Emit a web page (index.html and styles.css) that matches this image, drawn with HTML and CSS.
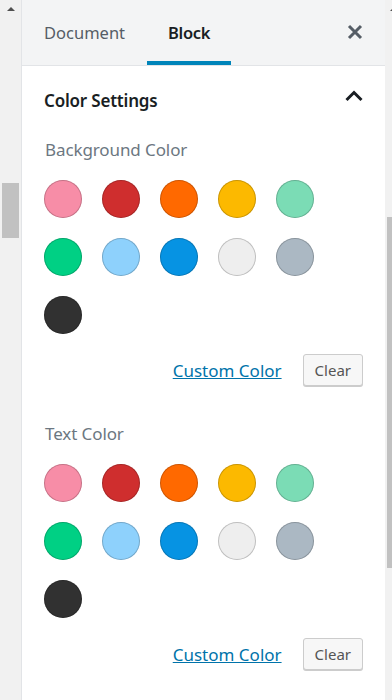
FILE: index.html
```html
<!DOCTYPE html>
<html lang="en">
<head>
    <meta charset="UTF-8">
    <meta name="viewport" content="width=device-width, initial-scale=1.0">
    <title>Block Settings</title>
    <link rel="stylesheet" href="styles.css">
</head>
<body>
    <div class="page">
        <div class="scrollbar left-bar">
            <span class="arrow-up"></span>
            <span class="thumb left-thumb"></span>
        </div>

        <aside class="sidebar">
            <div class="sidebar-header">
                <button class="tab">Document</button>
                <button class="tab active">Block</button>
                <button class="close-btn" aria-label="Close settings">
                    <svg width="20" height="20" viewBox="0 0 20 20">
                        <path d="M4 4 L16 16 M16 4 L4 16" stroke="#555d66" stroke-width="3" fill="none"/>
                    </svg>
                </button>
            </div>

            <div class="panel">
                <div class="panel-title">
                    <span>Color Settings</span>
                    <svg width="20" height="20" viewBox="0 0 20 20">
                        <path d="M2.5 10 L10 2.5 L17.5 10" stroke="#191e23" stroke-width="3" fill="none"/>
                    </svg>
                </div>

                <div class="color-section">
                    <div class="section-label">Background Color</div>
                    <div class="swatches" data-palette></div>
                    <div class="color-actions">
                        <a href="#" class="custom-link">Custom Color</a>
                        <button class="clear-btn">Clear</button>
                    </div>
                </div>

                <div class="color-section">
                    <div class="section-label">Text Color</div>
                    <div class="swatches" data-palette></div>
                    <div class="color-actions">
                        <a href="#" class="custom-link">Custom Color</a>
                        <button class="clear-btn">Clear</button>
                    </div>
                </div>
            </div>
        </aside>

        <div class="scrollbar right-bar">
            <span class="arrow-up"></span>
            <span class="thumb right-thumb"></span>
        </div>
    </div>

    <script>
        // default editor palette
        const palette = [
            '#f78da7', '#cf2e2e', '#ff6900', '#fcb900', '#7bdcb5',
            '#00d084', '#8ed1fc', '#0693e3', '#eeeeee', '#abb8c3',
            '#313131'
        ];

        document.querySelectorAll('[data-palette]').forEach(list => {
            palette.forEach(color => {
                const swatch = document.createElement('button');
                swatch.className = 'swatch';
                swatch.style.backgroundColor = color;
                list.appendChild(swatch);
            });
        });
    </script>
</body>
</html>
```

FILE: styles.css
```css
html, body {
    margin: 0;
    padding: 0;
}
body {
    font-family: "Noto Sans", "Open Sans", sans-serif;
    background-color: #f1f1f1;
    width: 392px;
    height: 700px;
    overflow: hidden;
}
button {
    font-family: inherit;
}
.page {
    display: flex;
    height: 700px;
}
.scrollbar {
    flex-shrink: 0;
    display: flex;
    flex-direction: column;
    align-items: center;
    background-color: #f1f1f1;
}
.left-bar {
    width: 21px;
}
.right-bar {
    width: 17px;
}
.arrow-up {
    display: block;
    width: 0;
    height: 0;
    margin-top: 7px;
    border-left: 4px solid transparent;
    border-right: 4px solid transparent;
    border-bottom: 4px solid #505050;
}
.thumb {
    display: block;
    background-color: #c1c1c1;
}
.left-thumb {
    width: 17px;
    height: 55px;
    margin-top: 172px;
}
.right-thumb {
    width: 13px;
    height: 351px;
    margin-top: 206px;
}
.sidebar {
    flex-shrink: 0;
    width: 363px;
    border-left: 1px solid #e2e4e7;
    background-color: #fff;
}
.sidebar-header {
    display: flex;
    align-items: stretch;
    height: 65px;
    background-color: #f3f4f5;
    border-bottom: 1px solid #e2e4e7;
}
.tab {
    background: none;
    border: none;
    padding: 4px 22px 0 22px;
    margin: 0;
    font-size: 16.5px;
    color: #555d66;
    cursor: pointer;
    border-bottom: 4px solid transparent;
}
.tab.active {
    padding: 4px 21px 0 21px;
    color: #191e23;
    font-weight: 600;
    letter-spacing: -0.3px;
    border-bottom-color: #0085ba;
}
.close-btn {
    margin-left: auto;
    margin-right: 20px;
    background: none;
    border: none;
    padding: 0 0 2px 0;
    display: flex;
    align-items: center;
    cursor: pointer;
}
.panel {
    padding: 22px 22px 0 22px;
}
.panel-title {
    display: flex;
    justify-content: space-between;
    align-items: center;
    height: 24px;
    font-size: 17px;
    font-weight: 600;
    letter-spacing: -0.2px;
    color: #191e23;
}
.panel-title svg {
    margin-right: -1px;
}
.color-section {
    margin-top: 26px;
}
.color-section + .color-section {
    margin-top: 36px;
}
.section-label {
    font-size: 17px;
    line-height: 24px;
    letter-spacing: -0.1px;
    color: #6c7781;
    padding-left: 1px;
}
.swatches {
    display: grid;
    grid-template-columns: repeat(5, 38px);
    gap: 20px;
    margin-top: 18px;
}
.swatch {
    width: 38px;
    height: 38px;
    padding: 0;
    border: none;
    border-radius: 50%;
    box-shadow: inset 0 0 0 1px rgba(0, 0, 0, 0.2);
    cursor: pointer;
}
.color-actions {
    display: flex;
    justify-content: flex-end;
    align-items: center;
    gap: 21px;
    margin-top: 20px;
}
.custom-link {
    font-size: 17px;
    color: #0073aa;
    text-decoration: underline;
}
.clear-btn {
    height: 32px;
    padding: 0 11px;
    font-size: 15px;
    color: #555;
    background-color: #f7f7f7;
    border: 1px solid #ccc;
    border-radius: 3px;
    box-shadow: 0 1px 0 #ccc;
    cursor: pointer;
}
```
